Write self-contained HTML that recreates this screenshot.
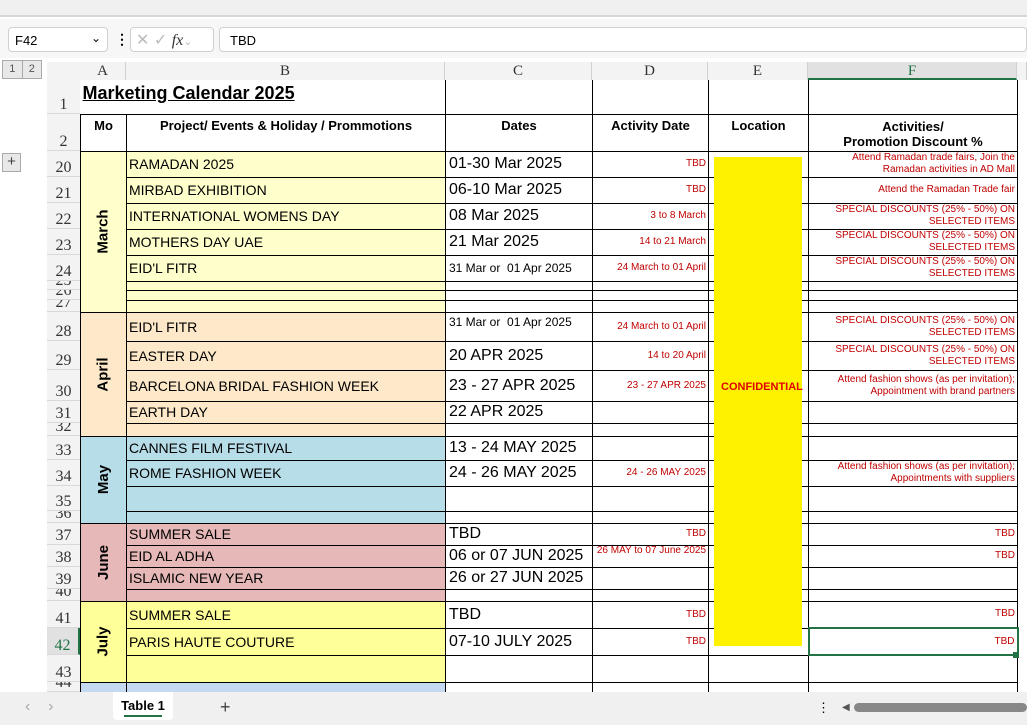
<!DOCTYPE html>
<html><head><meta charset="utf-8"><style>
*{box-sizing:border-box;margin:0;padding:0}
body{width:1027px;height:725px;overflow:hidden;background:#fff;font-family:"Liberation Sans",Arial,sans-serif;position:relative}
.abs{position:absolute}
table{position:absolute;left:80px;top:80px;border-collapse:collapse;table-layout:fixed}
td{border:1px solid #000;padding:0 2px;font-size:14px;overflow:hidden;white-space:nowrap;vertical-align:middle;line-height:1}
tr.e td{font-size:0;line-height:0}
.m{background:#ffffcc}.ap{background:#fde9c9}.my{background:#b7dde8}.jn{background:#e6b8b7}.jl{background:#ffff99}.bl{background:#c5d9f1}
.c{font-size:16px;padding-left:3px}
.d{color:#c00000;font-size:10px;text-align:right;padding-right:2px}
.f{color:#c00000;font-size:10px;text-align:right;line-height:12px;white-space:normal;padding-right:2px}
.mon{font-weight:bold;font-size:15px;text-align:center;padding:0}
.mon span{display:inline-block;transform:rotate(-90deg)}
.rh{position:absolute;left:47px;width:33px;text-align:center;font-family:"Liberation Serif",serif;font-size:16px;color:#333;border-bottom:1px solid #d8d8d8;background:#f3f3f3;overflow:hidden;display:flex;align-items:flex-end;justify-content:center;line-height:1}
.ch{position:absolute;top:62px;height:18px;text-align:center;font-family:"Liberation Serif",serif;font-size:15px;color:#333;background:#f3f3f3;border-right:1px solid #d0d0d0;line-height:18px}
.h{font-weight:bold;font-size:13px;text-align:center;vertical-align:top;padding-top:4px}
</style></head><body>
<div class="abs" style="left:0;top:0;width:1027px;height:17px;background:#f0f0f0;border-bottom:2px solid #d6d6d6"></div>
<div class="abs" style="left:0;top:19px;width:1027px;height:39px;background:#f7f7f7"></div>
<div class="abs" style="left:8px;top:27px;width:100px;height:25px;border:1px solid #d0d0d0;border-radius:4px;background:#fff;font-size:13px;padding:5px 6px">F42<span style="position:absolute;right:6px;top:3px;font-size:12px">⌄</span></div>
<div class="abs" style="left:115px;top:31px;font-size:14px;font-weight:bold">⋮</div>
<div class="abs" style="left:130px;top:27px;width:84px;height:25px;border:1px solid #d0d0d0;border-radius:4px;background:#fff;color:#bbb;font-size:16px;padding:2px 5px">✕ ✓ <i style="font-family:'Liberation Serif';color:#333">fx</i><span style="font-size:11px">⌄</span></div>
<div class="abs" style="left:219px;top:27px;width:808px;height:25px;border:1px solid #d0d0d0;border-radius:4px;background:#fff;font-size:13px;padding:5px 10px">TBD</div>
<div class="abs" style="left:2px;top:60px;width:40px;height:19px;border:1px solid #aaa;background:#e8e8e8;font-size:11px;color:#555;display:flex"><span style="flex:1;text-align:center;border-right:1px solid #aaa;line-height:17px">1</span><span style="flex:1;text-align:center;line-height:17px">2</span></div>
<div class="abs" style="left:2px;top:153px;width:19px;height:19px;border:1px solid #aaa;background:#e8e8e8;font-size:15px;text-align:center;line-height:16px;color:#444">+</div>
<div class="abs" style="left:47px;top:62px;width:33px;height:18px;background:#f3f3f3"></div>
<div class="ch" style="left:80px;width:46px">A</div><div class="ch" style="left:126px;width:319px">B</div><div class="ch" style="left:445px;width:147px">C</div><div class="ch" style="left:592px;width:116px">D</div><div class="ch" style="left:708px;width:100px">E</div><div class="ch" style="left:808px;width:209px;background:#e1e1e1;border-bottom:2px solid #217346;color:#217346">F</div><div class="ch" style="left:1017px;width:10px"></div>
<div class="rh" style="top:80px;height:34px">1</div><div class="rh" style="top:114px;height:37px">2</div><div class="rh" style="top:151px;height:26px">20</div><div class="rh" style="top:177px;height:26px">21</div><div class="rh" style="top:203px;height:26px">22</div><div class="rh" style="top:229px;height:26px">23</div><div class="rh" style="top:255px;height:26px">24</div><div class="rh" style="top:281px;height:9px">25</div><div class="rh" style="top:290px;height:10px">26</div><div class="rh" style="top:300px;height:12px">27</div><div class="rh" style="top:312px;height:29px">28</div><div class="rh" style="top:341px;height:29px">29</div><div class="rh" style="top:370px;height:31px">30</div><div class="rh" style="top:401px;height:22px">31</div><div class="rh" style="top:423px;height:13px">32</div><div class="rh" style="top:436px;height:24px">33</div><div class="rh" style="top:460px;height:26px">34</div><div class="rh" style="top:486px;height:25px">35</div><div class="rh" style="top:511px;height:12px">36</div><div class="rh" style="top:523px;height:22px">37</div><div class="rh" style="top:545px;height:22px">38</div><div class="rh" style="top:567px;height:22px">39</div><div class="rh" style="top:589px;height:12px">40</div><div class="rh" style="top:601px;height:27px">41</div><div class="rh" style="top:628px;height:27px;background:#e1e1e1;color:#217346;border-right:2px solid #217346">42</div><div class="rh" style="top:655px;height:27px">43</div><div class="rh" style="top:682px;height:10px">44</div>
<table>
<colgroup><col style="width:46px"><col style="width:319px"><col style="width:147px"><col style="width:116px"><col style="width:100px"><col style="width:209px"></colgroup>
<tr style="height:34px"><td colspan="2" style="border-top:none;border-left:none;font-weight:bold;font-size:18px;text-decoration:underline;vertical-align:top;padding-top:4px">Marketing Calendar 2025</td><td style="border-top:none"></td><td style="border-top:none"></td><td style="border-top:none"></td><td style="border-top:none"></td></tr>
<tr style="height:37px"><td class="h">Mo</td><td class="h">Project/ Events &amp; Holiday / Prommotions</td><td class="h">Dates</td><td class="h">Activity Date</td><td class="h">Location</td><td class="h" style="line-height:15px;padding-top:3px"><div style="height:31px;overflow:hidden;padding-top:1px">Activities/<br>Promotion Discount %</div></td></tr>
<tr style="height:26px"><td class="m mon" rowspan="8"><span>March</span></td><td class="m">RAMADAN 2025</td><td class="c">01-30 Mar 2025</td><td class="d">TBD</td><td></td><td class="f">Attend Ramadan trade fairs, Join the Ramadan activities in AD Mall</td></tr>
<tr style="height:26px"><td class="m">MIRBAD EXHIBITION</td><td class="c">06-10 Mar 2025</td><td class="d">TBD</td><td></td><td class="f">Attend the Ramadan Trade fair</td></tr>
<tr style="height:26px"><td class="m">INTERNATIONAL WOMENS DAY</td><td class="c">08 Mar 2025</td><td class="d">3 to 8 March</td><td></td><td class="f">SPECIAL DISCOUNTS (25% - 50%) ON SELECTED ITEMS</td></tr>
<tr style="height:26px"><td class="m">MOTHERS DAY UAE</td><td class="c">21 Mar 2025</td><td class="d">14 to 21 March</td><td></td><td class="f">SPECIAL DISCOUNTS (25% - 50%) ON SELECTED ITEMS</td></tr>
<tr style="height:26px"><td class="m">EID'L FITR</td><td style="font-size:12px;padding-left:3px">31 Mar or &nbsp;01 Apr 2025</td><td class="d">24 March to 01 April</td><td></td><td class="f">SPECIAL DISCOUNTS (25% - 50%) ON SELECTED ITEMS</td></tr>
<tr class="e" style="height:9px"><td class="m"></td><td></td><td></td><td></td><td></td></tr>
<tr class="e" style="height:10px"><td class="m"></td><td></td><td></td><td></td><td></td></tr>
<tr class="e" style="height:12px"><td class="m"></td><td></td><td></td><td></td><td></td></tr>
<tr style="height:29px"><td class="ap mon" rowspan="5"><span>April</span></td><td class="ap">EID'L FITR</td><td style="font-size:12px;padding-left:3px;vertical-align:top;padding-top:3px">31 Mar or &nbsp;01 Apr 2025</td><td class="d">24 March to 01 April</td><td></td><td class="f">SPECIAL DISCOUNTS (25% - 50%) ON SELECTED ITEMS</td></tr>
<tr style="height:29px"><td class="ap">EASTER DAY</td><td class="c">20 APR 2025</td><td class="d">14 to 20 April</td><td></td><td class="f">SPECIAL DISCOUNTS (25% - 50%) ON SELECTED ITEMS</td></tr>
<tr style="height:31px"><td class="ap">BARCELONA BRIDAL FASHION WEEK</td><td class="c">23 - 27 APR 2025</td><td class="d">23 - 27 APR 2025</td><td></td><td class="f">Attend fashion shows (as per invitation); Appointment with brand partners</td></tr>
<tr style="height:22px"><td class="ap">EARTH DAY</td><td class="c">22 APR 2025</td><td></td><td></td><td></td></tr>
<tr class="e" style="height:13px"><td class="ap"></td><td></td><td></td><td></td><td></td></tr>
<tr style="height:24px"><td class="my mon" rowspan="4"><span>May</span></td><td class="my">CANNES FILM FESTIVAL</td><td class="c">13 - 24 MAY 2025</td><td></td><td></td><td></td></tr>
<tr style="height:26px"><td class="my">ROME FASHION WEEK</td><td class="c">24 - 26 MAY 2025</td><td class="d">24 - 26 MAY 2025</td><td></td><td class="f">Attend fashion shows (as per invitation); Appointments with suppliers</td></tr>
<tr class="e" style="height:25px"><td class="my"></td><td></td><td></td><td></td><td></td></tr>
<tr class="e" style="height:12px"><td class="my"></td><td></td><td></td><td></td><td></td></tr>
<tr style="height:22px"><td class="jn mon" rowspan="4"><span>June</span></td><td class="jn">SUMMER SALE</td><td class="c">TBD</td><td class="d">TBD</td><td></td><td class="d">TBD</td></tr>
<tr style="height:22px"><td class="jn">EID AL ADHA</td><td class="c">06 or 07 JUN 2025</td><td class="d" style="white-space:normal;line-height:10px;vertical-align:top">26 MAY to 07 June 2025</td><td></td><td class="d">TBD</td></tr>
<tr style="height:22px"><td class="jn">ISLAMIC NEW YEAR</td><td class="c">26 or 27 JUN 2025</td><td></td><td></td><td></td></tr>
<tr class="e" style="height:12px"><td class="jn"></td><td></td><td></td><td></td><td></td></tr>
<tr style="height:27px"><td class="jl mon" rowspan="3"><span>July</span></td><td class="jl">SUMMER SALE</td><td class="c">TBD</td><td class="d">TBD</td><td></td><td class="d">TBD</td></tr>
<tr style="height:27px"><td class="jl">PARIS HAUTE COUTURE</td><td class="c">07-10 JULY 2025</td><td class="d">TBD</td><td></td><td class="d" style="border:2px solid #217346">TBD</td></tr>
<tr class="e" style="height:27px"><td class="jl"></td><td></td><td></td><td></td><td></td></tr>
<tr class="e" style="height:10px"><td class="bl"></td><td class="bl"></td><td></td><td></td><td></td><td></td></tr>
</table>
<div class="abs" style="left:714px;top:157px;width:88px;height:489px;background:#fff200"></div>
<div class="abs" style="left:721px;top:381px;color:#e00000;font-weight:bold;font-size:11px">CONFIDENTIAL</div>
<div class="abs" style="left:1013px;top:652px;width:6px;height:6px;background:#217346"></div>
<div class="abs" style="left:0;top:692px;width:1027px;height:33px;background:#f0f0f0"></div>
<div class="abs" style="left:25px;top:698px;color:#aaa;font-size:16px">‹ &nbsp;&nbsp;&nbsp;›</div>
<div class="abs" style="left:113px;top:692px;width:60px;height:28px;background:#fff;font-size:13px;font-weight:bold;text-align:center;padding-top:6px;border-radius:0 0 4px 4px">Table 1<div style="margin:2px auto 0;width:38px;height:2px;background:#217346"></div></div>
<div class="abs" style="left:220px;top:697px;font-size:18px;color:#444">+</div>
<div class="abs" style="left:817px;top:700px;font-size:13px">⋮</div>
<div class="abs" style="left:842px;top:702px;font-size:10px;color:#555">◀</div>
<div class="abs" style="left:854px;top:703px;width:173px;height:9px;background:#888;border-radius:5px"></div>
</body></html>
